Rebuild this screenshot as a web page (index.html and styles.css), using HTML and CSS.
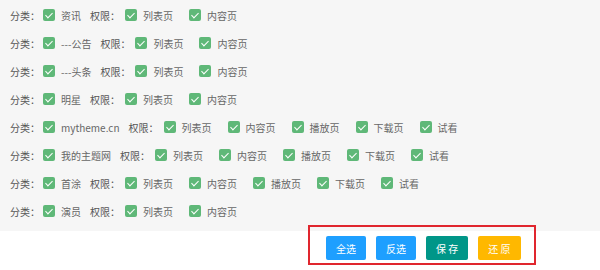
FILE: index.html
```html
<html>

<head>
    <meta charset="UTF-8">
    <link rel="stylesheet" href="styles.css">
</head>

<body>
    <div class="list">
        <div class="row">
            <span class="title">分类：</span>
            <span class="item cat"><i class="cb"></i>资讯</span>
            <span class="title perm">权限：</span>
            <span class="item"><i class="cb"></i>列表页</span>
            <span class="item"><i class="cb"></i>内容页</span>
        </div>
        <div class="row">
            <span class="title">分类：</span>
            <span class="item cat"><i class="cb"></i>---公告</span>
            <span class="title perm">权限：</span>
            <span class="item"><i class="cb"></i>列表页</span>
            <span class="item"><i class="cb"></i>内容页</span>
        </div>
        <div class="row">
            <span class="title">分类：</span>
            <span class="item cat"><i class="cb"></i>---头条</span>
            <span class="title perm">权限：</span>
            <span class="item"><i class="cb"></i>列表页</span>
            <span class="item"><i class="cb"></i>内容页</span>
        </div>
        <div class="row">
            <span class="title">分类：</span>
            <span class="item cat"><i class="cb"></i>明星</span>
            <span class="title perm">权限：</span>
            <span class="item"><i class="cb"></i>列表页</span>
            <span class="item"><i class="cb"></i>内容页</span>
        </div>
        <div class="row">
            <span class="title">分类：</span>
            <span class="item cat"><i class="cb"></i>mytheme.cn</span>
            <span class="title perm">权限：</span>
            <span class="item"><i class="cb"></i>列表页</span>
            <span class="item"><i class="cb"></i>内容页</span>
            <span class="item"><i class="cb"></i>播放页</span>
            <span class="item"><i class="cb"></i>下载页</span>
            <span class="item"><i class="cb"></i>试看</span>
        </div>
        <div class="row">
            <span class="title">分类：</span>
            <span class="item cat"><i class="cb"></i>我的主题网</span>
            <span class="title perm">权限：</span>
            <span class="item"><i class="cb"></i>列表页</span>
            <span class="item"><i class="cb"></i>内容页</span>
            <span class="item"><i class="cb"></i>播放页</span>
            <span class="item"><i class="cb"></i>下载页</span>
            <span class="item"><i class="cb"></i>试看</span>
        </div>
        <div class="row">
            <span class="title">分类：</span>
            <span class="item cat"><i class="cb"></i>首涂</span>
            <span class="title perm">权限：</span>
            <span class="item"><i class="cb"></i>列表页</span>
            <span class="item"><i class="cb"></i>内容页</span>
            <span class="item"><i class="cb"></i>播放页</span>
            <span class="item"><i class="cb"></i>下载页</span>
            <span class="item"><i class="cb"></i>试看</span>
        </div>
        <div class="row">
            <span class="title">分类：</span>
            <span class="item cat"><i class="cb"></i>演员</span>
            <span class="title perm">权限：</span>
            <span class="item"><i class="cb"></i>列表页</span>
            <span class="item"><i class="cb"></i>内容页</span>
        </div>
    </div>

    <div class="bar">
        <button class="btn blue">全选</button>
        <button class="btn blue">反选</button>
        <button class="btn teal">保&nbsp;存</button>
        <button class="btn warm">还&nbsp;原</button>
    </div>
</body>

</html>
```

FILE: styles.css
```css
* {
    font-family: "Noto Sans CJK SC", "Microsoft YaHei", sans-serif;
    box-sizing: border-box;
}
body {
    margin: 0;
    background: #fff;
}
.list {
    background: #f6f6f6;
    padding: 1px 0 6px 10px;
}
.row {
    display: flex;
    flex-direction: row;
    align-items: center;
    height: 28px;
    font-size: 10px;
}
.title {
    color: #555;
    margin-right: 3px;
}
.title.perm {
    margin-right: 5px;
}
.item {
    display: flex;
    align-items: center;
    color: #666;
    margin-right: 16px;
}
.item.cat {
    margin-right: 9px;
}
.cb {
    position: relative;
    width: 12px;
    height: 12px;
    margin-right: 6px;
    background: #5fb878;
    border-radius: 2px;
}
.cb::after {
    content: "";
    position: absolute;
    left: 4px;
    top: 2px;
    width: 3px;
    height: 6px;
    border-right: 1.5px solid #fff;
    border-bottom: 1.5px solid #fff;
    transform: rotate(45deg);
}
.bar {
    display: flex;
    gap: 10px;
    width: 228px;
    height: 40px;
    margin: -6px 0 0 308px;
    padding: 9px 10px 0 16px;
    border: 2px solid #e0262e;
}
.btn {
    height: 24px;
    padding: 0 10px;
    font-size: 10px;
    color: #fff;
    border: none;
    border-radius: 2px;
    cursor: pointer;
}
.blue {
    background: #1e9fff;
}
.teal {
    background: #009688;
}
.warm {
    background: #ffb800;
}
```
